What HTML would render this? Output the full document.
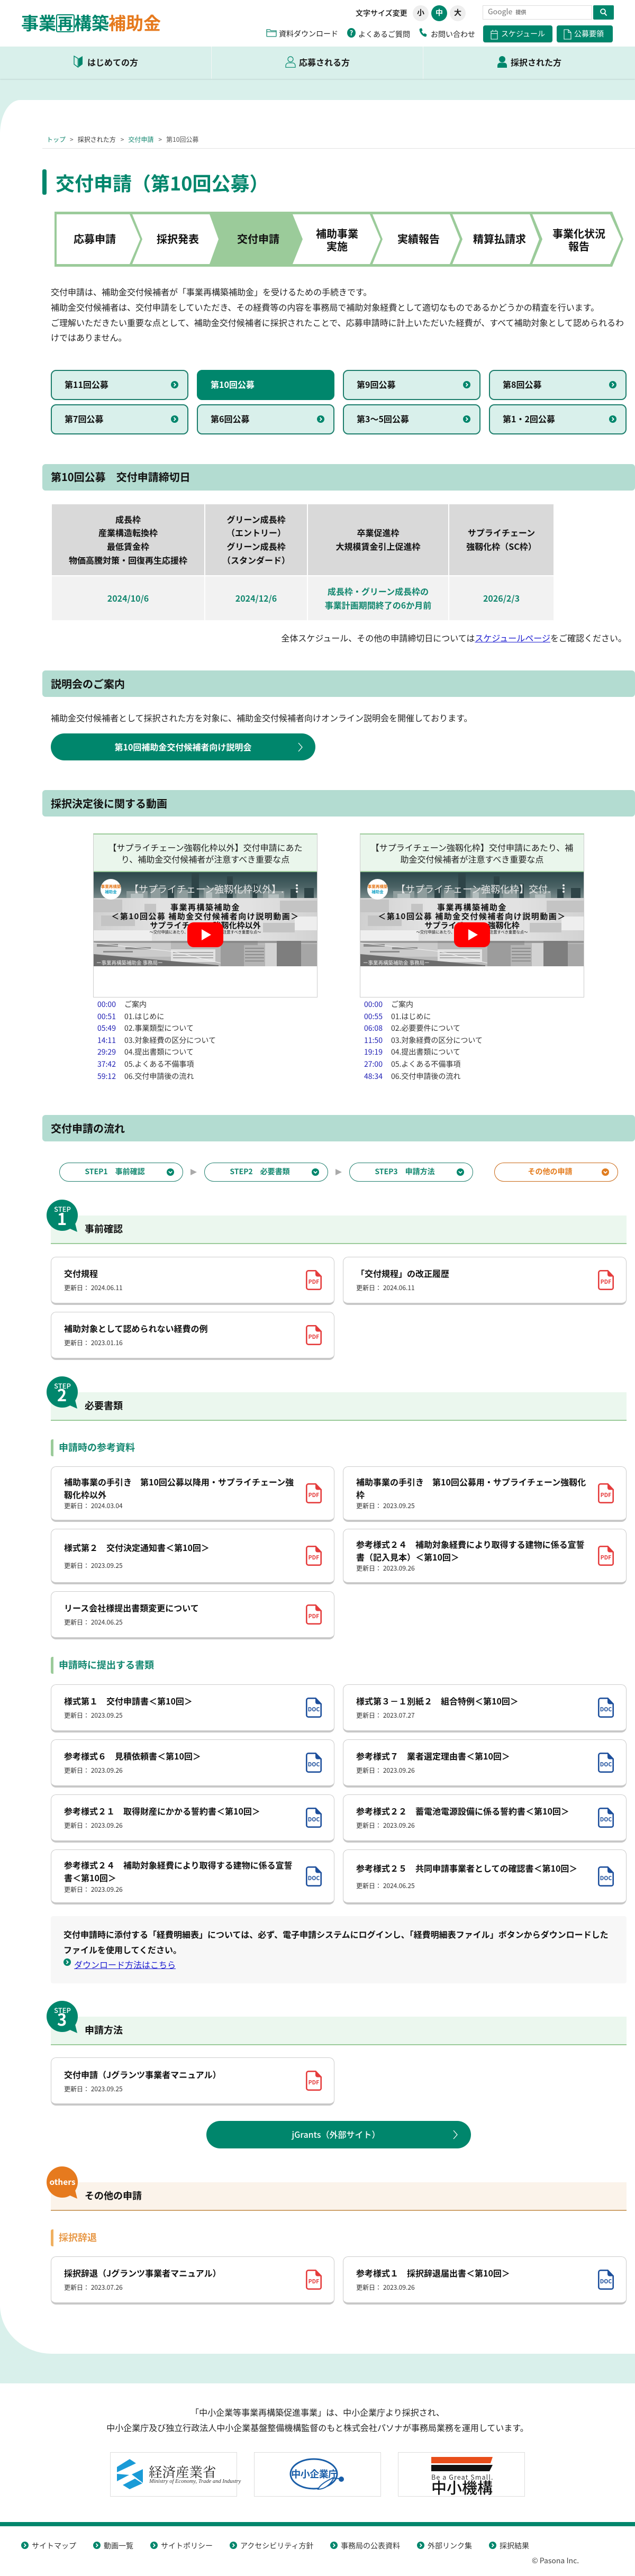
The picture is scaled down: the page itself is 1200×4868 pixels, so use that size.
<!DOCTYPE html>
<html lang="ja">
<head>
<meta charset="utf-8">
<title>交付申請（第10回公募）｜事業再構築補助金</title>
<style>
*{box-sizing:border-box}
html,body{margin:0;padding:0;background:#fff}
body{position:relative;width:1200px;height:4868px;overflow:hidden;font-family:"Noto Sans CJK JP","Liberation Sans",sans-serif;color:#1a1a1a;font-size:16px}
a{color:inherit;text-decoration:none}
.a{position:absolute;white-space:nowrap}
.bgt{position:absolute;left:0;top:88px;width:1200px;height:4416px;background:#d9f0eb}
.panel{position:absolute;left:0;top:189px;width:1200px;height:4259px;background:#fff;border-radius:38px 0 0 98px/64px 0 0 92px}
.nav{position:absolute;top:88px;height:61px;width:400px;background:#d9f0eb;box-shadow:0 1px 2px rgba(0,0,0,.12);border-right:1px solid #fff}
.navt{position:absolute;top:97px;font-size:16px;font-weight:700;line-height:40px;white-space:nowrap}
.sz{position:absolute;top:10px;width:30px;height:30px;border-radius:50%;background:#eee;text-align:center;font-weight:700;font-size:14px;line-height:29px}
.gbtn{position:absolute;top:48px;height:32px;background:#00866c;border-radius:4px;box-shadow:0 1px 1px rgba(0,0,0,.15)}
.lg{position:absolute;top:18px;font-size:33px;font-weight:700;line-height:48px;white-space:nowrap;color:#00866c}
.sh{position:absolute;left:80px;width:1120px;background:#b3dcd1;border-radius:6px;font-weight:700;font-size:20px;padding-left:16px;color:#111;white-space:nowrap}
.p{position:absolute;left:96px;font-size:16px;line-height:28.8px;white-space:nowrap;color:#222}
.tab{position:absolute;width:260px;height:57px;background:#d9f0eb;border:2px solid #1b7d6b;border-radius:10px;font-weight:700;font-size:16px;line-height:51px;padding-left:24px;color:#111}
.tab.on{background:#00866c;border-color:#00866c;color:#fff}
.tab svg{position:absolute;right:17px;top:19px}
.ca{width:14px;height:14px;display:block}
table.dl{position:absolute;left:96px;top:951px;border-collapse:separate;border-spacing:2px;table-layout:fixed;width:952px}
table.dl th{background:#d9d9d9;height:134px;font-size:16px;line-height:25.6px;font-weight:700;text-align:center;padding:0;color:#111}
table.dl td{background:#f2f2f2;height:83px;font-size:16px;line-height:25.6px;font-weight:700;text-align:center;padding:0;color:#12876f}
.pbtn{position:absolute;background:#00866c;color:#fff;border-radius:26px;font-weight:700;font-size:16px;text-align:center;white-space:nowrap}
.pbtn svg{position:absolute;top:50%;margin-top:-10px}
.vc{position:absolute;top:1575px;width:424px;height:310px;border:1px solid #ccc;border-top:2px solid #9bcb9a;background:#fff}
.vt{height:71px;background:#eaf6ec;border-bottom:2px solid #9bcb9a;text-align:center;font-size:16px;line-height:22px;padding-top:13px;white-space:nowrap;color:#222}
.th{position:relative;height:178px;overflow:hidden;background:#989c9c}
.th>svg.city{position:absolute;left:0;top:0;width:422px;height:178px}
.th .ct{position:absolute;left:0;width:100%;text-align:center;font-weight:700;color:#111;white-space:nowrap}
.tl{position:absolute;top:1887px;font-size:14px;line-height:22.6px;white-space:nowrap;color:#333}
.tl div{height:22.6px}
.tl b{display:inline-block;font-weight:400;color:#1e1eb4;width:51px}
.pill{position:absolute;top:2197px;width:234px;height:36px;border:1.5px solid #1b7d6b;border-radius:18px;background:#fff;color:#12876f;font-weight:700;font-size:14px;line-height:33px;text-align:center;padding-right:24px;white-space:nowrap}
.pill svg{position:absolute;right:16px;top:10px}
.pill.o{border-color:#c9650f;color:#e47b1c;padding-right:23px}
.tri{position:absolute;top:2209px;width:0;height:0;border-left:12px solid #aaa;border-top:6px solid transparent;border-bottom:6px solid transparent}
.band{position:absolute;left:96px;width:1088px;height:54px;background:#ebf7ee;border-bottom:2px solid #9bcb9a;font-weight:700;font-size:18px;padding-left:64px;line-height:48px;padding-top:1px;white-space:nowrap;color:#111}
.band.o{background:#fbf3ea;border-bottom-color:#cfa36c}
.bub{position:absolute;left:88px;width:60px;height:62px}
.h4{position:absolute;left:96px;height:32px;border-left:5px solid #9bcb9a;border-radius:3px;padding-left:10px;font-size:18px;font-weight:700;line-height:30px;color:#12876f;white-space:nowrap}
.h4.o{border-left-color:#f0b060;color:#e89a4a}
.c{position:absolute;width:536px;height:91px;background:#fff;border:1px solid #ccc;border-bottom:4px solid #c8c8c8;border-radius:10px}
.c.l{left:96px}.c.r{left:648px}
.c .t{position:absolute;left:24px;top:18px;font-size:16px;font-weight:700;line-height:24px;white-space:nowrap;color:#111}
.c .d{position:absolute;left:24px;top:49px;font-size:12px;line-height:18px;white-space:nowrap;color:#333}
.c.b{height:105px}
.c.b .t{top:16px}.c.b .d{top:65px}
.c .ic{position:absolute;left:481px;top:24px;width:30px;height:38px}
.c.b .ic{top:31px}
.ic text{font-size:10.5px;font-weight:700;text-anchor:middle;font-family:"Noto Sans CJK JP",sans-serif}
.logo{position:absolute;top:4634px;width:240px;height:84px;border:1px solid #ddd;background:#fff}
.fl{position:absolute;top:4801px;font-size:14px;line-height:20px;white-space:nowrap;color:#333}
.fi{position:absolute;top:4803px}
</style>
</head>
<body>

<!-- shared thumbnail backdrop (non-text graphic) -->
<svg width="0" height="0" style="position:absolute;left:0;top:0">
<defs>
<linearGradient id="sky" x1="0" y1="0" x2="0" y2="1"><stop offset="0" stop-color="#2c484c"/><stop offset=".55" stop-color="#4a6264"/><stop offset="1" stop-color="#7b8c8d"/></linearGradient>
<linearGradient id="bd" x1="0" y1="0" x2="1" y2="0"><stop offset="0" stop-color="#d0d0d0"/><stop offset=".3" stop-color="#e2e2e2"/><stop offset=".7" stop-color="#e2e2e2"/><stop offset="1" stop-color="#d2d2d2"/></linearGradient>
</defs>
<symbol id="city" viewBox="0 0 422 178">
<rect width="422" height="50" fill="url(#sky)"/>
<g fill="#2e4447"><rect x="185" y="2" width="14" height="48"/><rect x="252" y="8" width="11" height="42"/><rect x="300" y="22" width="9" height="28"/><rect x="372" y="32" width="12" height="18"/><rect x="398" y="30" width="18" height="20"/><rect x="140" y="30" width="12" height="20"/></g>
<g fill="#8f9d9d"><rect x="62" y="36" width="40" height="14"/><rect x="108" y="30" width="18" height="20"/><rect x="158" y="34" width="20" height="16"/><rect x="208" y="30" width="30" height="20"/><rect x="270" y="34" width="26" height="16"/><rect x="320" y="36" width="40" height="14"/></g>
<g fill="#b4bebe"><rect x="70" y="41" width="24" height="9"/><rect x="212" y="38" width="12" height="12"/><rect x="330" y="42" width="20" height="8"/></g>
<rect y="49" width="422" height="81" fill="url(#bd)"/>
<g fill="#c4c4c4"><rect x="0" y="52" width="54" height="24"/><rect x="14" y="82" width="64" height="20"/><rect x="352" y="54" width="70" height="22"/><rect x="96" y="60" width="22" height="30"/><rect x="320" y="96" width="60" height="18"/></g>
<g fill="#eeeeee"><rect x="0" y="110" width="110" height="20"/><rect x="380" y="84" width="42" height="26"/></g>
<rect y="130" width="422" height="48" fill="#b9b9b9"/>
<rect x="0" y="130" width="146" height="30" fill="#cbcbcb"/>
<g fill="#8c8c8c"><rect x="6" y="136" width="40" height="5"/><rect x="60" y="142" width="48" height="4"/><rect x="18" y="149" width="56" height="3"/></g>
<rect x="146" y="146" width="84" height="24" fill="#e2e2e2"/>
<g fill="#a8a8a8"><rect x="150" y="151" width="76" height="2"/><rect x="150" y="156" width="76" height="2"/><rect x="150" y="161" width="76" height="2"/></g>
<rect x="240" y="130" width="70" height="48" fill="#9c9c9c"/>
<rect x="284" y="138" width="40" height="40" fill="#b4b4b4"/>
<g fill="#8e8e8e"><rect x="286" y="143" width="36" height="2"/><rect x="286" y="149" width="36" height="2"/><rect x="286" y="155" width="36" height="2"/><rect x="286" y="161" width="36" height="2"/><rect x="286" y="167" width="36" height="2"/></g>
<rect x="324" y="134" width="22" height="44" fill="#d2d2d2"/>
<rect x="346" y="130" width="46" height="48" fill="#7e7e7e"/>
<rect x="392" y="136" width="30" height="42" fill="#a6a6a6"/>
<rect x="0" y="130" width="422" height="4" fill="#7a7a7a" opacity=".55"/>
<path d="M0 134 150 150 240 172" fill="none" stroke="#f2f2f2" stroke-width="1"/>
<polygon points="0,155 236,176 236,178 0,178" fill="#6d6d6d"/>
</symbol>
</svg>

<!-- background -->
<div class="bgt"></div>
<div class="panel"></div>

<!-- logo -->
<div class="lg" style="left:40px">事業</div>
<div class="a" style="left:106px;top:27px;width:35px;height:34px;border:2px solid #00866c;border-radius:3px;background:#fff"></div>
<div class="lg" style="left:109px;top:19px;font-size:29px">再</div>
<div class="lg" style="left:140px">構築</div>
<div class="lg" style="left:205px;color:#e67a1e">補助金</div>

<!-- header top -->
<div class="a" style="left:672px;top:14px;font-size:14px;font-weight:500;line-height:22px;color:#111">文字サイズ変更</div>
<div class="sz" style="left:780px">小</div>
<div class="sz" style="left:815px;background:#00866c;color:#fff">中</div>
<div class="sz" style="left:850px">大</div>
<div class="a" style="left:912px;top:10px;width:207px;height:27px;border:1px solid #ddd;background:#fff;padding-left:9px;line-height:23px;font-size:14px;color:#777">Google <span style="font-size:10px;font-weight:700;margin-left:3px">提供</span></div>
<div class="a" style="left:1121px;top:10px;width:39px;height:27px;background:#00866c;border-radius:2px"><svg width="39" height="27" viewBox="0 0 39 27"><circle cx="18.5" cy="11.5" r="4.4" fill="none" stroke="#fff" stroke-width="1.8"/><path d="M21.5 15l4 4.5" stroke="#fff" stroke-width="2"/></svg></div>

<svg class="a" style="left:503px;top:54px" width="20" height="16" viewBox="0 0 20 16"><path d="M1 14V2h6l2 2h10v10a1 1 0 0 1-1 1H2a1 1 0 0 1-1-1zM1 6h18" fill="none" stroke="#12876f" stroke-width="1.3"/></svg>
<div class="a" style="left:527px;top:53px;font-size:14px;line-height:22px;color:#222">資料ダウンロード</div>
<div class="a" style="left:656px;top:53px;width:16px;height:18px;border-radius:50%;background:#00866c;color:#fff;text-align:center;font-size:13px;line-height:17px;font-weight:700">?</div>
<div class="a" style="left:677px;top:53px;font-size:14px;line-height:24px;color:#222">よくあるご質問</div>
<svg class="a" style="left:792px;top:53px" width="16" height="17" viewBox="0 0 16 17"><path d="M2 .8 5 .3l1.6 4.4-2 1.2c.7 2.3 2.3 4.3 4.4 5.500l1.6-1.700 4 2.500-.8 2.900c-.3 1-1.300 1.600-2.300 1.300C6 15 1.500 9.600.6 3.500.5 2.200 1 1.200 2 .8z" fill="#00866c"/></svg>
<div class="a" style="left:814px;top:53px;font-size:14px;line-height:24px;color:#222">お問い合わせ</div>

<div class="gbtn" style="left:913px;width:131px">
<svg style="position:absolute;left:14px;top:8px" width="14" height="19" viewBox="0 0 14 19"><path d="M1 3h12v15H1zM1 7.5h12M4 .5v3M10 .5v3" fill="none" stroke="#fff" stroke-width="1.1"/></svg>
<span class="a" style="left:34px;top:5px;color:#fff;font-size:14px;line-height:22px">スケジュール</span></div>
<div class="gbtn" style="left:1052px;width:106px">
<svg style="position:absolute;left:13px;top:7px" width="15" height="20" viewBox="0 0 15 20"><path d="M1 1h8l5 5.500V19H1zM9 1v5.500h5" fill="none" stroke="#fff" stroke-width="1.1"/></svg>
<span class="a" style="left:33px;top:5px;color:#fff;font-size:14px;line-height:22px">公募要領</span></div>

<!-- nav -->
<div class="nav" style="left:0"></div>
<div class="nav" style="left:400px"></div>
<div class="nav" style="left:800px;border-right:0"></div>
<svg class="a" style="left:139px;top:105px" width="18" height="23" viewBox="0 0 18 23"><path d="M1 1l7.500 4.500V22L1 16.500z" fill="#d9f0eb" stroke="#00866c" stroke-width="1.4"/><path d="M17 1L9.500 5.500V22l7.500-5.500z" fill="#00866c"/></svg>
<div class="navt" style="left:165px">はじめての方</div>
<svg class="a" style="left:539px;top:106px" width="20" height="22" viewBox="0 0 20 22"><circle cx="10" cy="6" r="5" fill="none" stroke="#00866c" stroke-width="1.2"/><path d="M1 21.300v-3c0-3.500 3-5.500 5-5.500h8c2.500 0 5 2 5 5.500v3z" fill="none" stroke="#00866c" stroke-width="1.2"/></svg>
<div class="navt" style="left:565px">応募される方</div>
<svg class="a" style="left:939px;top:106px" width="20" height="22" viewBox="0 0 20 22"><circle cx="10" cy="6" r="6" fill="#00866c"/><path d="M1 22v-4c0-3.500 3-5.500 5-5.500h8c2.500 0 5 2 5 5.500v4z" fill="#00866c"/></svg>
<div class="navt" style="left:965px">採択された方</div>

<!-- breadcrumb -->
<div class="a" style="left:88px;top:255px;font-size:12px;line-height:18px;color:#555"><span style="color:#12876f">トップ</span><span style="margin:0 8px 0 8px">&gt;</span><span style="color:#333">採択された方</span><span style="margin:0 8px 0 9px">&gt;</span><span style="color:#12876f">交付申請</span><span style="margin:0 8px 0 9px">&gt;</span><span>第10回公募</span></div>
<div class="a" style="left:80px;top:280px;width:1120px;height:1px;background:#e2e2e2"></div>

<!-- h1 -->
<div class="a" style="left:80px;top:320px;width:8px;height:48px;background:#00866c;border-radius:3px"></div>
<h1 class="a" style="left:105px;top:317px;margin:0;font-size:36px;line-height:56px;font-weight:700;color:#00866c">交付申請（第10回公募）</h1>

<!-- stepper -->
<svg class="a" style="left:100px;top:398px" width="1090" height="110" viewBox="100 398 1090 110">
<polygon fill="#9bcb9a" points="103,400 1157,400 1178,452 1157,504 103,504"/>
<g fill="#fff">
<polygon points="107,405 245,405 265,452 245,499 107,499"/>
<polygon points="250,405 396,405 413,452 396,499 250,499 269,452"/>
<polygon points="553,405 699,405 719,452 699,499 553,499 572,452"/>
<polygon points="704,405 850,405 869,452 850,499 704,499 723,452"/>
<polygon points="855,405 1001,405 1019,452 1001,499 855,499 874,452"/>
<polygon points="1006,405 1153,405 1174,452 1153,499 1006,499 1025,452"/>
</g>
<g font-family="Noto Sans CJK JP,sans-serif" font-size="20" font-weight="700" text-anchor="middle" fill="#111">
<text x="179" y="459">応募申請</text>
<text x="336" y="459">採択発表</text>
<text x="488" y="459">交付申請</text>
<text x="637" y="449">補助事業</text>
<text x="637" y="473">実施</text>
<text x="791" y="459">実績報告</text>
<text x="944" y="459">精算払請求</text>
<text x="1094" y="449">事業化状況</text>
<text x="1094" y="473">報告</text>
</g>
</svg>

<!-- intro -->
<div class="p" style="top:537px">交付申請は、補助金交付候補者が「事業再構築補助金」を受けるための手続きです。<br>補助金交付候補者は、交付申請をしていただき、その経費等の内容を事務局で補助対象経費として適切なものであるかどうかの精査を行います。<br>ご理解いただきたい重要な点として、補助金交付候補者に採択されたことで、応募申請時に計上いただいた経費が、すべて補助対象として認められるわ<br>けではありません。</div>

<!-- tabs -->
<a class="tab" style="left:96px;top:699px">第11回公募<svg class="ca" viewBox="0 0 14 14"><circle cx="7" cy="7" r="7" fill="#00866c"/><path d="M5.500 3.800 8.700 7 5.500 10.200" fill="none" stroke="#fff" stroke-width="1.800"/></svg></a>
<a class="tab on" style="left:372px;top:699px">第10回公募</a>
<a class="tab" style="left:648px;top:699px">第9回公募<svg class="ca" viewBox="0 0 14 14"><circle cx="7" cy="7" r="7" fill="#00866c"/><path d="M5.500 3.800 8.700 7 5.500 10.200" fill="none" stroke="#fff" stroke-width="1.800"/></svg></a>
<a class="tab" style="left:924px;top:699px">第8回公募<svg class="ca" viewBox="0 0 14 14"><circle cx="7" cy="7" r="7" fill="#00866c"/><path d="M5.500 3.800 8.700 7 5.500 10.200" fill="none" stroke="#fff" stroke-width="1.800"/></svg></a>
<a class="tab" style="left:96px;top:764px">第7回公募<svg class="ca" viewBox="0 0 14 14"><circle cx="7" cy="7" r="7" fill="#00866c"/><path d="M5.500 3.800 8.700 7 5.500 10.200" fill="none" stroke="#fff" stroke-width="1.800"/></svg></a>
<a class="tab" style="left:372px;top:764px">第6回公募<svg class="ca" viewBox="0 0 14 14"><circle cx="7" cy="7" r="7" fill="#00866c"/><path d="M5.500 3.800 8.700 7 5.500 10.200" fill="none" stroke="#fff" stroke-width="1.800"/></svg></a>
<a class="tab" style="left:648px;top:764px">第3～5回公募<svg class="ca" viewBox="0 0 14 14"><circle cx="7" cy="7" r="7" fill="#00866c"/><path d="M5.500 3.800 8.700 7 5.500 10.200" fill="none" stroke="#fff" stroke-width="1.800"/></svg></a>
<a class="tab" style="left:924px;top:764px">第1・2回公募<svg class="ca" viewBox="0 0 14 14"><circle cx="7" cy="7" r="7" fill="#00866c"/><path d="M5.500 3.800 8.700 7 5.500 10.200" fill="none" stroke="#fff" stroke-width="1.800"/></svg></a>

<!-- deadlines -->
<h2 class="sh" style="margin:0;top:877px;height:50px;line-height:48px">第10回公募　交付申請締切日</h2>
<table class="dl">
<colgroup><col style="width:288px"><col style="width:192px"><col style="width:265px"><col style="width:197px"></colgroup>
<tr><th>成長枠<br>産業構造転換枠<br>最低賃金枠<br>物価高騰対策・回復再生応援枠</th><th>グリーン成長枠<br>（エントリー）<br>グリーン成長枠<br>（スタンダード）</th><th>卒業促進枠<br>大規模賃金引上促進枠</th><th>サプライチェーン<br>強靱化枠（SC枠）</th></tr>
<tr><td>2024/10/6</td><td>2024/12/6</td><td>成長枠・グリーン成長枠の<br>事業計画期間終了の6か月前</td><td>2026/2/3</td></tr>
</table>
<div class="a" style="left:auto;right:16px;top:1191px;font-size:16px;line-height:28px;color:#222">全体スケジュール、その他の申請締切日については<a style="color:#1a1ad0;text-decoration:underline">スケジュールページ</a>をご確認ください。</div>

<!-- briefing -->
<h2 class="sh" style="margin:0;top:1267px;height:50px;line-height:50px">説明会のご案内</h2>
<div class="p" style="top:1342px">補助金交付候補者として採択された方を対象に、補助金交付候補者向けオンライン説明会を開催しております。</div>
<a class="pbtn" style="left:96px;top:1386px;width:500px;height:51px;line-height:50px">第10回補助金交付候補者向け説明会<svg style="left:466px" width="12" height="20" viewBox="0 0 12 20"><path d="M2 2l7 8-7 8" fill="none" stroke="#fff" stroke-width="1.300"/></svg></a>

<!-- videos -->
<h2 class="sh" style="margin:0;top:1493px;height:50px;line-height:50px">採択決定後に関する動画</h2>

<div class="vc" style="left:176px">
<div class="vt">【サプライチェーン強靱化枠以外】交付申請にあた<br>り、補助金交付候補者が注意すべき重要な点</div>
<div class="th">
<svg class="city"><use href="#city"/></svg>
<div style="position:absolute;left:13px;top:13px;width:39px;height:39px;border-radius:50%;background:#fff;text-align:center;font-size:7.500px;line-height:10px;padding-top:10px;font-weight:700;color:#e67a1e;white-space:nowrap">事業再構築<br><span style="color:#1aa5c8">補助金</span></div>
<div class="a" style="left:67px;top:18px;width:292px;overflow:hidden;font-size:18px;line-height:28px;color:#e8e8e8">【サプライチェーン強靱化枠以外】...</div>
<svg style="position:absolute;left:381px;top:22px" width="6" height="18" viewBox="0 0 6 18"><circle cx="3" cy="3" r="2" fill="#eee"/><circle cx="3" cy="9" r="2" fill="#eee"/><circle cx="3" cy="15" r="2" fill="#eee"/></svg>
<div class="ct" style="top:56px;font-size:15px;letter-spacing:1.500px;line-height:22px">事業再構築補助金</div>
<div class="ct" style="top:73px;font-size:15px;letter-spacing:1.500px;line-height:22px">＜第10回公募 補助金交付候補者向け説明動画＞</div>
<div class="ct" style="top:90px;font-size:15px;line-height:22px">サプライチェーン強靱化枠以外</div>
<div class="ct" style="top:108px;font-size:7.300px;line-height:12px;font-weight:400">～交付申請にあたり、補助金交付候補者が注意すべき重要な点～</div>
<svg style="position:absolute;left:177px;top:95px" width="68" height="47" viewBox="0 0 68 47"><rect width="68" height="47" rx="12" fill="#f00"/><path d="M27 13l18 10.500L27 34z" fill="#fff"/></svg>
<div class="a" style="left:5px;top:164px;font-size:9.500px;line-height:14px;color:#eee">ー事業再構築補助金 事務局ー</div>
</div>
</div>
<div class="tl" style="left:184px"><div><b>00:00</b>ご案内</div><div><b>00:51</b>01.はじめに</div><div><b>05:49</b>02.事業類型について</div><div><b>14:11</b>03.対象経費の区分について</div><div><b>29:29</b>04.提出書類について</div><div><b>37:42</b>05.よくある不備事項</div><div><b>59:12</b>06.交付申請後の流れ</div></div>

<div class="vc" style="left:680px">
<div class="vt">【サプライチェーン強靱化枠】交付申請にあたり、補<br>助金交付候補者が注意すべき重要な点</div>
<div class="th">
<svg class="city"><use href="#city"/></svg>
<div style="position:absolute;left:13px;top:13px;width:39px;height:39px;border-radius:50%;background:#fff;text-align:center;font-size:7.500px;line-height:10px;padding-top:10px;font-weight:700;color:#e67a1e;white-space:nowrap">事業再構築<br><span style="color:#1aa5c8">補助金</span></div>
<div class="a" style="left:67px;top:18px;width:292px;overflow:hidden;font-size:18px;line-height:28px;color:#e8e8e8">【サプライチェーン強靱化枠】交付...</div>
<svg style="position:absolute;left:381px;top:22px" width="6" height="18" viewBox="0 0 6 18"><circle cx="3" cy="3" r="2" fill="#eee"/><circle cx="3" cy="9" r="2" fill="#eee"/><circle cx="3" cy="15" r="2" fill="#eee"/></svg>
<div class="ct" style="top:56px;font-size:15px;letter-spacing:1.500px;line-height:22px">事業再構築補助金</div>
<div class="ct" style="top:73px;font-size:15px;letter-spacing:1.500px;line-height:22px">＜第10回公募 補助金交付候補者向け説明動画＞</div>
<div class="ct" style="top:90px;font-size:15px;line-height:22px">サプライチェーン強靱化枠</div>
<div class="ct" style="top:108px;font-size:7.300px;line-height:12px;font-weight:400">～交付申請にあたり、補助金交付候補者が注意すべき重要な点～</div>
<svg style="position:absolute;left:177px;top:95px" width="68" height="47" viewBox="0 0 68 47"><rect width="68" height="47" rx="12" fill="#f00"/><path d="M27 13l18 10.500L27 34z" fill="#fff"/></svg>
<div class="a" style="left:5px;top:164px;font-size:9.500px;line-height:14px;color:#eee">ー事業再構築補助金 事務局ー</div>
</div>
</div>
<div class="tl" style="left:688px"><div><b>00:00</b>ご案内</div><div><b>00:55</b>01.はじめに</div><div><b>06:08</b>02.必要要件について</div><div><b>11:50</b>03.対象経費の区分について</div><div><b>19:19</b>04.提出書類について</div><div><b>27:00</b>05.よくある不備事項</div><div><b>48:34</b>06.交付申請後の流れ</div></div>

<!-- flow -->
<h2 class="sh" style="margin:0;top:2107px;height:50px;line-height:50px">交付申請の流れ</h2>
<a class="pill" style="left:112px">STEP1　事前確認<svg class="ca" viewBox="0 0 14 14"><circle cx="7" cy="7" r="7" fill="#00866c"/><path d="M3.800 5.500 7 8.700 10.200 5.500" fill="none" stroke="#fff" stroke-width="1.800"/></svg></a>
<div class="tri" style="left:360px"></div>
<a class="pill" style="left:386px">STEP2　必要書類<svg class="ca" viewBox="0 0 14 14"><circle cx="7" cy="7" r="7" fill="#00866c"/><path d="M3.800 5.500 7 8.700 10.200 5.500" fill="none" stroke="#fff" stroke-width="1.800"/></svg></a>
<div class="tri" style="left:634px"></div>
<a class="pill" style="left:660px">STEP3　申請方法<svg class="ca" viewBox="0 0 14 14"><circle cx="7" cy="7" r="7" fill="#00866c"/><path d="M3.800 5.500 7 8.700 10.200 5.500" fill="none" stroke="#fff" stroke-width="1.800"/></svg></a>
<a class="pill o" style="left:934px">その他の申請<svg class="ca" viewBox="0 0 14 14"><circle cx="7" cy="7" r="7" fill="#e07d20"/><path d="M3.800 5.500 7 8.700 10.200 5.500" fill="none" stroke="#fff" stroke-width="1.800"/></svg></a>

<!-- step 1 -->
<h3 class="band" style="margin:0;top:2297px">事前確認</h3>
<svg class="bub" style="top:2267px" viewBox="0 0 60 62"><circle cx="29.500" cy="29.500" r="29.500" fill="#00866c"/><path d="M42 54l16 7-5-20z" fill="#00866c"/><text x="30" y="23" font-family="Noto Sans CJK JP,sans-serif" font-size="13" font-weight="500" fill="#fff" text-anchor="middle">STEP</text><text x="29" y="48" font-family="Noto Sans CJK JP,sans-serif" font-size="31" font-weight="700" fill="#fff" text-anchor="middle">1</text></svg>

<a class="c l" style="top:2375px"><div class="t">交付規程</div><div class="d">更新日： 2024.06.11</div><svg class="ic" viewBox="0 0 30 38"><path d="M5 1.300h13.500L28.700 12v21.500a3.200 3.200 0 0 1-3.200 3.200H5a3.700 3.700 0 0 1-3.700-3.700V5A3.700 3.700 0 0 1 5 1.300z" fill="#fff" stroke="#e53c3c" stroke-width="2.600"/><path d="M18 1.300 28.700 12.500h-7a3.700 3.700 0 0 1-3.700-3.700z" fill="#e53c3c"/><text x="15" y="26" fill="#e53c3c">PDF</text></svg></a>
<a class="c r" style="top:2375px"><div class="t">「交付規程」の改正履歴</div><div class="d">更新日： 2024.06.11</div><svg class="ic" viewBox="0 0 30 38"><path d="M5 1.300h13.500L28.700 12v21.500a3.200 3.200 0 0 1-3.200 3.200H5a3.700 3.700 0 0 1-3.700-3.700V5A3.700 3.700 0 0 1 5 1.300z" fill="#fff" stroke="#e53c3c" stroke-width="2.600"/><path d="M18 1.300 28.700 12.500h-7a3.700 3.700 0 0 1-3.700-3.700z" fill="#e53c3c"/><text x="15" y="26" fill="#e53c3c">PDF</text></svg></a>
<a class="c l" style="top:2479px"><div class="t">補助対象として認められない経費の例</div><div class="d">更新日： 2023.01.16</div><svg class="ic" viewBox="0 0 30 38"><path d="M5 1.300h13.500L28.700 12v21.500a3.200 3.200 0 0 1-3.200 3.200H5a3.700 3.700 0 0 1-3.700-3.700V5A3.700 3.700 0 0 1 5 1.300z" fill="#fff" stroke="#e53c3c" stroke-width="2.600"/><path d="M18 1.300 28.700 12.500h-7a3.700 3.700 0 0 1-3.700-3.700z" fill="#e53c3c"/><text x="15" y="26" fill="#e53c3c">PDF</text></svg></a>

<!-- step 2 -->
<h3 class="band" style="margin:0;top:2631px">必要書類</h3>
<svg class="bub" style="top:2601px" viewBox="0 0 60 62"><circle cx="29.500" cy="29.500" r="29.500" fill="#00866c"/><path d="M42 54l16 7-5-20z" fill="#00866c"/><text x="30" y="23" font-family="Noto Sans CJK JP,sans-serif" font-size="13" font-weight="500" fill="#fff" text-anchor="middle">STEP</text><text x="29" y="47" font-family="Noto Sans CJK JP,sans-serif" font-size="31" font-weight="700" fill="#fff" text-anchor="middle">2</text></svg>

<div class="h4" style="top:2720px">申請時の参考資料</div>

<a class="c l b" style="top:2771px"><div class="t">補助事業の手引き　第10回公募以降用・サプライチェーン強<br>靱化枠以外</div><div class="d">更新日： 2024.03.04</div><svg class="ic" viewBox="0 0 30 38"><path d="M5 1.300h13.500L28.700 12v21.500a3.200 3.200 0 0 1-3.200 3.200H5a3.700 3.700 0 0 1-3.700-3.700V5A3.700 3.700 0 0 1 5 1.300z" fill="#fff" stroke="#e53c3c" stroke-width="2.600"/><path d="M18 1.300 28.700 12.500h-7a3.700 3.700 0 0 1-3.700-3.700z" fill="#e53c3c"/><text x="15" y="26" fill="#e53c3c">PDF</text></svg></a>
<a class="c r b" style="top:2771px"><div class="t">補助事業の手引き　第10回公募用・サプライチェーン強靱化<br>枠</div><div class="d">更新日： 2023.09.25</div><svg class="ic" viewBox="0 0 30 38"><path d="M5 1.300h13.500L28.700 12v21.500a3.200 3.200 0 0 1-3.200 3.200H5a3.700 3.700 0 0 1-3.700-3.700V5A3.700 3.700 0 0 1 5 1.300z" fill="#fff" stroke="#e53c3c" stroke-width="2.600"/><path d="M18 1.300 28.700 12.500h-7a3.700 3.700 0 0 1-3.700-3.700z" fill="#e53c3c"/><text x="15" y="26" fill="#e53c3c">PDF</text></svg></a>
<a class="c l b" style="top:2889px"><div class="t" style="top:22px">様式第２　交付決定通知書＜第10回＞</div><div class="d" style="top:60px">更新日： 2023.09.25</div><svg class="ic" viewBox="0 0 30 38"><path d="M5 1.300h13.500L28.700 12v21.500a3.200 3.200 0 0 1-3.200 3.200H5a3.700 3.700 0 0 1-3.700-3.700V5A3.700 3.700 0 0 1 5 1.300z" fill="#fff" stroke="#e53c3c" stroke-width="2.600"/><path d="M18 1.300 28.700 12.500h-7a3.700 3.700 0 0 1-3.700-3.700z" fill="#e53c3c"/><text x="15" y="26" fill="#e53c3c">PDF</text></svg></a>
<a class="c r b" style="top:2889px"><div class="t">参考様式２４　補助対象経費により取得する建物に係る宣誓<br>書（記入見本）＜第10回＞</div><div class="d">更新日： 2023.09.26</div><svg class="ic" viewBox="0 0 30 38"><path d="M5 1.300h13.500L28.700 12v21.500a3.200 3.200 0 0 1-3.200 3.200H5a3.700 3.700 0 0 1-3.700-3.700V5A3.700 3.700 0 0 1 5 1.300z" fill="#fff" stroke="#e53c3c" stroke-width="2.600"/><path d="M18 1.300 28.700 12.500h-7a3.700 3.700 0 0 1-3.700-3.700z" fill="#e53c3c"/><text x="15" y="26" fill="#e53c3c">PDF</text></svg></a>
<a class="c l" style="top:3007px"><div class="t">リース会社様提出書類変更について</div><div class="d">更新日： 2024.06.25</div><svg class="ic" viewBox="0 0 30 38"><path d="M5 1.300h13.500L28.700 12v21.500a3.200 3.200 0 0 1-3.200 3.200H5a3.700 3.700 0 0 1-3.700-3.700V5A3.700 3.700 0 0 1 5 1.300z" fill="#fff" stroke="#e53c3c" stroke-width="2.600"/><path d="M18 1.300 28.700 12.500h-7a3.700 3.700 0 0 1-3.700-3.700z" fill="#e53c3c"/><text x="15" y="26" fill="#e53c3c">PDF</text></svg></a>

<div class="h4" style="top:3131px">申請時に提出する書類</div>

<a class="c l" style="top:3183px"><div class="t">様式第１　交付申請書＜第10回＞</div><div class="d">更新日： 2023.09.25</div><svg class="ic" viewBox="0 0 30 38"><path d="M5 1.300h13.500L28.700 12v21.500a3.200 3.200 0 0 1-3.200 3.200H5a3.700 3.700 0 0 1-3.700-3.700V5A3.700 3.700 0 0 1 5 1.300z" fill="#fff" stroke="#1d4f9c" stroke-width="2.600"/><path d="M18 1.300 28.700 12.500h-7a3.700 3.700 0 0 1-3.700-3.700z" fill="#1d4f9c"/><text x="15" y="26" fill="#1d4f9c">DOC</text></svg></a>
<a class="c r" style="top:3183px"><div class="t">様式第３－１別紙２　組合特例＜第10回＞</div><div class="d">更新日： 2023.07.27</div><svg class="ic" viewBox="0 0 30 38"><path d="M5 1.300h13.500L28.700 12v21.500a3.200 3.200 0 0 1-3.200 3.200H5a3.700 3.700 0 0 1-3.700-3.700V5A3.700 3.700 0 0 1 5 1.300z" fill="#fff" stroke="#1d4f9c" stroke-width="2.600"/><path d="M18 1.300 28.700 12.500h-7a3.700 3.700 0 0 1-3.700-3.700z" fill="#1d4f9c"/><text x="15" y="26" fill="#1d4f9c">DOC</text></svg></a>
<a class="c l" style="top:3287px"><div class="t">参考様式６　見積依頼書＜第10回＞</div><div class="d">更新日： 2023.09.26</div><svg class="ic" viewBox="0 0 30 38"><path d="M5 1.300h13.500L28.700 12v21.500a3.200 3.200 0 0 1-3.200 3.200H5a3.700 3.700 0 0 1-3.700-3.700V5A3.700 3.700 0 0 1 5 1.300z" fill="#fff" stroke="#1d4f9c" stroke-width="2.600"/><path d="M18 1.300 28.700 12.500h-7a3.700 3.700 0 0 1-3.700-3.700z" fill="#1d4f9c"/><text x="15" y="26" fill="#1d4f9c">DOC</text></svg></a>
<a class="c r" style="top:3287px"><div class="t">参考様式７　業者選定理由書＜第10回＞</div><div class="d">更新日： 2023.09.26</div><svg class="ic" viewBox="0 0 30 38"><path d="M5 1.300h13.500L28.700 12v21.500a3.200 3.200 0 0 1-3.200 3.200H5a3.700 3.700 0 0 1-3.700-3.700V5A3.700 3.700 0 0 1 5 1.300z" fill="#fff" stroke="#1d4f9c" stroke-width="2.600"/><path d="M18 1.300 28.700 12.500h-7a3.700 3.700 0 0 1-3.700-3.700z" fill="#1d4f9c"/><text x="15" y="26" fill="#1d4f9c">DOC</text></svg></a>
<a class="c l" style="top:3391px"><div class="t">参考様式２１　取得財産にかかる誓約書＜第10回＞</div><div class="d">更新日： 2023.09.26</div><svg class="ic" viewBox="0 0 30 38"><path d="M5 1.300h13.500L28.700 12v21.500a3.200 3.200 0 0 1-3.200 3.200H5a3.700 3.700 0 0 1-3.700-3.700V5A3.700 3.700 0 0 1 5 1.300z" fill="#fff" stroke="#1d4f9c" stroke-width="2.600"/><path d="M18 1.300 28.700 12.500h-7a3.700 3.700 0 0 1-3.700-3.700z" fill="#1d4f9c"/><text x="15" y="26" fill="#1d4f9c">DOC</text></svg></a>
<a class="c r" style="top:3391px"><div class="t">参考様式２２　蓄電池電源設備に係る誓約書＜第10回＞</div><div class="d">更新日： 2023.09.26</div><svg class="ic" viewBox="0 0 30 38"><path d="M5 1.300h13.500L28.700 12v21.500a3.200 3.200 0 0 1-3.200 3.200H5a3.700 3.700 0 0 1-3.700-3.700V5A3.700 3.700 0 0 1 5 1.300z" fill="#fff" stroke="#1d4f9c" stroke-width="2.600"/><path d="M18 1.300 28.700 12.500h-7a3.700 3.700 0 0 1-3.700-3.700z" fill="#1d4f9c"/><text x="15" y="26" fill="#1d4f9c">DOC</text></svg></a>
<a class="c l b" style="top:3495px;height:104px"><div class="t">参考様式２４　補助対象経費により取得する建物に係る宣誓<br>書＜第10回＞</div><div class="d" style="top:66px">更新日： 2023.09.26</div><svg class="ic" viewBox="0 0 30 38"><path d="M5 1.300h13.500L28.700 12v21.500a3.200 3.200 0 0 1-3.200 3.200H5a3.700 3.700 0 0 1-3.700-3.700V5A3.700 3.700 0 0 1 5 1.300z" fill="#fff" stroke="#1d4f9c" stroke-width="2.600"/><path d="M18 1.300 28.700 12.500h-7a3.700 3.700 0 0 1-3.700-3.700z" fill="#1d4f9c"/><text x="15" y="26" fill="#1d4f9c">DOC</text></svg></a>
<a class="c r b" style="top:3495px;height:104px"><div class="t" style="top:22px">参考様式２５　共同申請事業者としての確認書＜第10回＞</div><div class="d" style="top:59px">更新日： 2024.06.25</div><svg class="ic" viewBox="0 0 30 38"><path d="M5 1.300h13.500L28.700 12v21.500a3.200 3.200 0 0 1-3.200 3.200H5a3.700 3.700 0 0 1-3.700-3.700V5A3.700 3.700 0 0 1 5 1.300z" fill="#fff" stroke="#1d4f9c" stroke-width="2.600"/><path d="M18 1.300 28.700 12.500h-7a3.700 3.700 0 0 1-3.700-3.700z" fill="#1d4f9c"/><text x="15" y="26" fill="#1d4f9c">DOC</text></svg></a>

<!-- note -->
<div class="a" style="left:96px;top:3621px;width:1088px;height:127px;background:#f7f7f7;border-radius:4px"></div>
<div class="a" style="left:120px;top:3641px;font-size:16px;font-weight:700;line-height:28.800px;color:#111">交付申請時に添付する「経費明細表」については、必ず、電子申請システムにログインし、「経費明細表ファイル」ボタンからダウンロードした<br>ファイルを使用してください。</div>
<svg class="a ca" style="left:120px;top:3701px" viewBox="0 0 14 14"><circle cx="7" cy="7" r="7" fill="#00866c"/><path d="M5.500 3.800 8.700 7 5.500 10.200" fill="none" stroke="#fff" stroke-width="1.800"/></svg>
<a class="a" style="left:140px;top:3699px;font-size:16px;line-height:26px;color:#1a1ad0;text-decoration:underline">ダウンロード方法はこちら</a>

<!-- step 3 -->
<h3 class="band" style="margin:0;top:3811px">申請方法</h3>
<svg class="bub" style="top:3781px" viewBox="0 0 60 62"><circle cx="29.500" cy="29.500" r="29.500" fill="#00866c"/><path d="M42 54l16 7-5-20z" fill="#00866c"/><text x="30" y="23" font-family="Noto Sans CJK JP,sans-serif" font-size="13" font-weight="500" fill="#fff" text-anchor="middle">STEP</text><text x="29" y="47" font-family="Noto Sans CJK JP,sans-serif" font-size="31" font-weight="700" fill="#fff" text-anchor="middle">3</text></svg>
<a class="c l" style="top:3888px"><div class="t" style="top:19px">交付申請（Jグランツ事業者マニュアル）</div><div class="d" style="top:50px">更新日： 2023.09.25</div><svg class="ic" viewBox="0 0 30 38"><path d="M5 1.300h13.500L28.700 12v21.500a3.200 3.200 0 0 1-3.200 3.200H5a3.700 3.700 0 0 1-3.700-3.700V5A3.700 3.700 0 0 1 5 1.300z" fill="#fff" stroke="#e53c3c" stroke-width="2.600"/><path d="M18 1.300 28.700 12.500h-7a3.700 3.700 0 0 1-3.700-3.700z" fill="#e53c3c"/><text x="15" y="26" fill="#e53c3c">PDF</text></svg></a>
<a class="pbtn" style="left:390px;top:4008px;width:500px;height:52px;line-height:51px;padding-right:10px;font-weight:500">jGrants（外部サイト）<svg style="left:465px" width="12" height="20" viewBox="0 0 12 20"><path d="M2 2l7 8-7 8" fill="none" stroke="#fff" stroke-width="1.300"/></svg></a>

<!-- others -->
<h3 class="band o" style="margin:0;top:4124px">その他の申請</h3>
<svg class="bub" style="top:4094px" viewBox="0 0 60 62"><circle cx="29.500" cy="29.500" r="29.500" fill="#e67a1e"/><path d="M42 54l16 7-5-20z" fill="#e67a1e"/><text x="30" y="35" font-family="Noto Sans CJK JP,sans-serif" font-size="15.500" font-weight="700" fill="#fff" text-anchor="middle">others</text></svg>
<div class="h4 o" style="top:4213px">採択辞退</div>
<a class="c l" style="top:4264px"><div class="t">採択辞退（Jグランツ事業者マニュアル）</div><div class="d">更新日： 2023.07.26</div><svg class="ic" viewBox="0 0 30 38"><path d="M5 1.300h13.500L28.700 12v21.500a3.200 3.200 0 0 1-3.200 3.200H5a3.700 3.700 0 0 1-3.700-3.700V5A3.700 3.700 0 0 1 5 1.300z" fill="#fff" stroke="#e53c3c" stroke-width="2.600"/><path d="M18 1.300 28.700 12.500h-7a3.700 3.700 0 0 1-3.700-3.700z" fill="#e53c3c"/><text x="15" y="26" fill="#e53c3c">PDF</text></svg></a>
<a class="c r" style="top:4264px"><div class="t">参考様式１　採択辞退届出書＜第10回＞</div><div class="d">更新日： 2023.09.26</div><svg class="ic" viewBox="0 0 30 38"><path d="M5 1.300h13.500L28.700 12v21.500a3.200 3.200 0 0 1-3.200 3.200H5a3.700 3.700 0 0 1-3.700-3.700V5A3.700 3.700 0 0 1 5 1.300z" fill="#fff" stroke="#1d4f9c" stroke-width="2.600"/><path d="M18 1.300 28.700 12.500h-7a3.700 3.700 0 0 1-3.700-3.700z" fill="#1d4f9c"/><text x="15" y="26" fill="#1d4f9c">DOC</text></svg></a>

<!-- footer -->
<div class="a" style="left:0;top:4544px;width:1200px;text-align:center;font-size:16px;line-height:29px;color:#222">「中小企業等事業再構築促進事業」は、中小企業庁より採択され、<br>中小企業庁及び独立行政法人中小企業基盤整備機構監督のもと株式会社パソナが事務局業務を運用しています。</div>

<div class="logo" style="left:208px">
<svg style="position:absolute;left:12px;top:12px" width="50" height="58" viewBox="0 0 50 58"><g fill="#1a9bd7"><path d="M24 0l12 8L0 25V15z"/><path d="M0 28l23 2L0 42z"/><path d="M49 19v26L28 29z"/><path d="M11 49l23-12 14 9-24 11z"/></g></svg>
<div class="a" style="left:72px;top:18px;font-family:'Noto Serif CJK SC','Liberation Serif',serif;font-size:25.500px;line-height:36px;color:#222">経済産業省</div>
<div class="a" style="left:73px;top:48px;font-family:'Liberation Serif',serif;font-style:italic;font-size:10.500px;line-height:14px;color:#333">Ministry of Economy, Trade and Industry</div>
</div>
<div class="logo" style="left:480px">
<svg style="position:absolute;left:66px;top:10px" width="104" height="62" viewBox="0 0 104 62"><ellipse cx="46" cy="30" rx="44" ry="28" fill="none" stroke="#1a5ea8" stroke-width="3"/><path d="M54 59c4-9 16-16 30-22-4 9-14 22-30 22z" fill="#fff" stroke="#1a5ea8" stroke-width="2"/><circle cx="98" cy="40" r="5" fill="#1a5ea8"/><path d="M84 38l10 1" stroke="#1a5ea8" stroke-width="2"/></svg>
<div class="a" style="left:68px;top:26px;font-size:18px;font-weight:700;line-height:28px;color:#1a5ea8;letter-spacing:-.5px;width:90px;text-align:center;background:transparent">中小企業庁</div>
</div>
<div class="logo" style="left:752px">
<svg style="position:absolute;left:62px;top:8px" width="116" height="28" viewBox="0 0 116 28"><path d="M0 0h116l-4 12H0z" fill="#e84e1b"/><path d="M0 15h116l-6 12H0z" fill="#111"/></svg>
<div class="a" style="left:62px;top:37px;font-size:12.500px;line-height:18px;letter-spacing:1.100px;color:#333">Be a Great Small.</div>
<div class="a" style="left:62px;top:44px;font-size:29px;line-height:42px;letter-spacing:0;color:#111;font-weight:500">中小機構</div>
</div>

<div class="a" style="left:0;top:4766px;width:1200px;height:8px;background:#00866c"></div>

<svg class="fi ca" style="left:40px" viewBox="0 0 14 14"><circle cx="7" cy="7" r="7" fill="#00866c"/><path d="M5.500 3.800 8.700 7 5.500 10.200" fill="none" stroke="#fff" stroke-width="1.800"/></svg><a class="fl" style="left:60px">サイトマップ</a>
<svg class="fi ca" style="left:176px" viewBox="0 0 14 14"><circle cx="7" cy="7" r="7" fill="#00866c"/><path d="M5.500 3.800 8.700 7 5.500 10.200" fill="none" stroke="#fff" stroke-width="1.800"/></svg><a class="fl" style="left:196px">動画一覧</a>
<svg class="fi ca" style="left:284px" viewBox="0 0 14 14"><circle cx="7" cy="7" r="7" fill="#00866c"/><path d="M5.500 3.800 8.700 7 5.500 10.200" fill="none" stroke="#fff" stroke-width="1.800"/></svg><a class="fl" style="left:304px">サイトポリシー</a>
<svg class="fi ca" style="left:434px" viewBox="0 0 14 14"><circle cx="7" cy="7" r="7" fill="#00866c"/><path d="M5.500 3.800 8.700 7 5.500 10.200" fill="none" stroke="#fff" stroke-width="1.800"/></svg><a class="fl" style="left:454px">アクセシビリティ方針</a>
<svg class="fi ca" style="left:624px" viewBox="0 0 14 14"><circle cx="7" cy="7" r="7" fill="#00866c"/><path d="M5.500 3.800 8.700 7 5.500 10.200" fill="none" stroke="#fff" stroke-width="1.800"/></svg><a class="fl" style="left:644px">事務局の公表資料</a>
<svg class="fi ca" style="left:788px" viewBox="0 0 14 14"><circle cx="7" cy="7" r="7" fill="#00866c"/><path d="M5.500 3.800 8.700 7 5.500 10.200" fill="none" stroke="#fff" stroke-width="1.800"/></svg><a class="fl" style="left:808px">外部リンク集</a>
<svg class="fi ca" style="left:924px" viewBox="0 0 14 14"><circle cx="7" cy="7" r="7" fill="#00866c"/><path d="M5.500 3.800 8.700 7 5.500 10.200" fill="none" stroke="#fff" stroke-width="1.800"/></svg><a class="fl" style="left:944px">採択結果</a>
<div class="a" style="left:1005px;top:4829px;font-size:14px;line-height:20px;color:#444">© Pasona Inc.</div>

</body>
</html>
